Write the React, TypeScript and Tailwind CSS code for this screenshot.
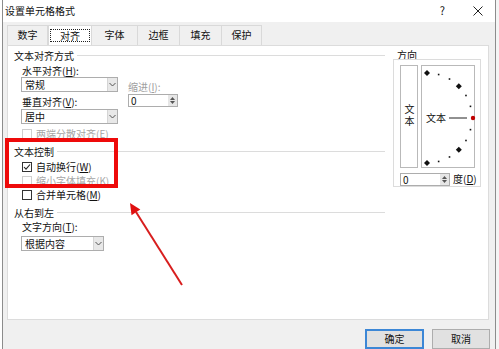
import React from "react";

const font = { fontFamily: '"Noto Sans CJK SC", "Noto Sans", sans-serif' };

function Header({ text }: { text: string }) {
  return (
    <div className="flex h-[14px] items-center">
      <span className="leading-none">{text}</span>
      <div className="ml-[3px] h-px flex-1 bg-[#dcdcdc]" />
    </div>
  );
}

function Select({ value, width }: { value: string; width: string }) {
  return (
    <div className={`flex h-[15px] ${width} border border-[#adadad] bg-white`}>
      <span className="flex-1 pl-[3px] leading-[13px]">{value}</span>
      <div className="flex w-[10px] items-center justify-center border-l border-[#d5d5d5] bg-[#e8e8e8]">
        <svg width="7" height="5" viewBox="0 0 7 5">
          <path d="M0.5 1 L3.5 4 L6.5 1" fill="none" stroke="#555" strokeWidth="1" />
        </svg>
      </div>
    </div>
  );
}

function Spinner({ width }: { width: string }) {
  return (
    <div className={`flex h-[13px] ${width} border border-[#adadad] bg-white`}>
      <span className="flex-1 pl-[2px] leading-[11px]">0</span>
      <div className="flex w-[9px] flex-col items-center justify-center gap-[1px] bg-[#e6e6e6]">
        <svg width="5" height="3" viewBox="0 0 5 3">
          <path d="M0 3 L2.5 0 L5 3 Z" fill="#555" />
        </svg>
        <svg width="5" height="3" viewBox="0 0 5 3">
          <path d="M0 0 L2.5 3 L5 0 Z" fill="#555" />
        </svg>
      </div>
    </div>
  );
}

function Check({ label, checked, disabled }: { label: React.ReactNode; checked?: boolean; disabled?: boolean }) {
  return (
    <div className={`flex h-[14px] items-center pl-px ${disabled ? "text-[#a6a6a6]" : "text-[#111]"}`}>
      <div
        className={`flex h-[10px] w-[10px] items-center justify-center border bg-white ${
          disabled ? "border-[#cfcfcf]" : "border-[#333]"
        }`}
      >
        {checked && (
          <svg width="8" height="8" viewBox="0 0 8 8">
            <path d="M1 4 L3 6.2 L7 1.5" fill="none" stroke="#222" strokeWidth="1.1" />
          </svg>
        )}
      </div>
      <span className="ml-[4px] leading-none">{label}</span>
    </div>
  );
}

// dots of the orientation dial, every 15 degrees
const dots = [90, 75, 60, 45, 30, 15, 0, -15, -30, -45, -60, -75, -90].map((deg) => {
  const r = (deg * Math.PI) / 180;
  return { deg, x: 5 + 45 * Math.cos(r), y: 52 - 45 * Math.sin(r) };
});

export default function App() {
  return (
    <div className="relative flex h-[349px] w-[499px] overflow-hidden bg-white text-[10px] text-[#111]" style={font}>
      <div className="ml-[2px] flex w-[494px] flex-col border-x border-[#8c8c8c] bg-[#f0f0f0]">
        {/* title bar */}
        <div className="flex h-[22px] items-center bg-white pl-[2px]">
          <span className="flex-1 leading-none">设置单元格格式</span>
          <span className="mr-[28px] text-[11px] leading-none">?</span>
          <svg width="10" height="10" viewBox="0 0 10 10" className="mr-[12px]">
            <path d="M0.5 0.5 L9.5 9.5 M9.5 0.5 L0.5 9.5" stroke="#222" strokeWidth="1" />
          </svg>
        </div>

        {/* tabs */}
        <div className="ml-[4px] mt-[3px] flex h-[20px]">
          {[
            ["数字", "w-[41px]"],
            ["对齐", "w-[44px]"],
            ["字体", "w-[46px]"],
            ["边框", "w-[42px]"],
            ["填充", "w-[42px]"],
            ["保护", "w-[40px]"],
          ].map(([t, w], i) =>
            i === 1 ? (
              <div key={t} className={`flex ${w} items-center justify-center border-x border-t border-[#d9d9d9] bg-white`}>
                <span className="border border-dotted border-[#222] px-[9px] leading-[11px]">{t}</span>
              </div>
            ) : (
              <div key={t} className={`flex ${w} items-center justify-center border-r border-t border-[#d9d9d9] bg-[#f0f0f0] leading-none ${i === 0 ? "border-l" : ""}`}>
                {t}
              </div>
            )
          )}
        </div>

        {/* panel */}
        <div className="ml-[4px] flex h-[278px] w-[482px] border border-[#dcdcdc] bg-white pl-[6px] pt-[3px]">
          <div className="flex w-[371px] flex-col">
            <Header text="文本对齐方式" />
            <div className="flex pl-[7px]">
              <div className="flex w-[97px] flex-col">
                <div className="mt-[2px] flex h-[12px] items-center pl-px leading-none">
                  水平对齐(<u>H</u>):
                </div>
                <div>
                  <Select value="常规" width="w-[97px]" />
                </div>
                <div className="mt-[4px] flex h-[12px] items-center pl-px leading-none">
                  垂直对齐(<u>V</u>):
                </div>
                <div className="mt-[1px]">
                  <Select value="居中" width="w-[97px]" />
                </div>
                <div className="mt-[3px] w-[120px]">
                  <Check label={<>两端分散对齐(<u>E</u>)</>} disabled />
                </div>
              </div>
              <div className="ml-[10px] flex flex-col pt-[18px]">
                <div className="flex h-[12px] items-center leading-none text-[#a0a0a0]">
                  缩进(<u>I</u>):
                </div>
                <div className="mt-[1px]">
                  <Spinner width="w-[50px]" />
                </div>
              </div>
            </div>

            <div className="mt-[4px]">
              <Header text="文本控制" />
            </div>
            <div className="mt-[1px] flex flex-col pl-[7px]">
              <Check label={<>自动换行(<u>W</u>)</>} checked />
              <Check label={<>缩小字体填充(<u>K</u>)</>} disabled />
              <Check label={<>合并单元格(<u>M</u>)</>} />
            </div>

            <div className="mt-[4px]">
              <Header text="从右到左" />
            </div>
            <div className="flex flex-col pl-[7px]">
              <div className="mt-[1px] flex h-[12px] items-center pl-px leading-none">
                文字方向(<u>T</u>):
              </div>
              <div className="mt-[3px]">
                <Select value="根据内容" width="w-[83px]" />
              </div>
            </div>
          </div>

          {/* orientation */}
          <div className="ml-[8px] flex flex-col pt-px">
            <div className="h-[10px] pl-[4px] leading-[10px]">方向</div>
            <div className="-mt-px flex h-[128px] w-[88px] flex-col border border-[#dcdcdc] pl-[6px] pt-[5px]">
              <div className="flex h-[103px] gap-[3px]">
                <div className="flex w-[18px] items-center justify-center border border-[#b9b9b9]">
                  <span className="leading-none tracking-[2px] [writing-mode:vertical-rl] [text-orientation:upright]">文本</span>
                </div>
                <div className="relative w-[54px] border border-[#b9b9b9]">
                  <svg width="54" height="101" viewBox="0 0 54 101" className="absolute left-0 top-0">
                    <line x1="27" y1="52" x2="45" y2="52" stroke="#222" strokeWidth="1" />
                    {dots.map((d) =>
                      d.deg === 0 ? (
                        <circle key={d.deg} cx={d.x + 1} cy={d.y} r="2.2" fill="#c00000" />
                      ) : Math.abs(d.deg) % 45 === 0 ? (
                        <path
                          key={d.deg}
                          d={`M${d.x} ${d.y - 3} L${d.x + 3} ${d.y} L${d.x} ${d.y + 3} L${d.x - 3} ${d.y} Z`}
                          fill="#111"
                        />
                      ) : (
                        <rect key={d.deg} x={d.x - 0.8} y={d.y - 0.8} width="1.6" height="1.6" fill="#111" />
                      )
                    )}
                  </svg>
                  <span className="absolute left-[4px] top-[46px] leading-[12px]">文本</span>
                </div>
              </div>
              <div className="mt-[5px] flex items-center">
                <Spinner width="w-[50px]" />
                <span className="ml-[3px] leading-none">
                  度(<u>D</u>)
                </span>
              </div>
            </div>
          </div>
        </div>

        {/* buttons */}
        <div className="mt-[9px] flex justify-end gap-[8px] pr-[5px]">
          <div className="flex h-[20px] w-[59px] items-center justify-center border-2 border-[#3c87d6] bg-[#e1e1e1] leading-none">
            确定
          </div>
          <div className="flex h-[20px] w-[58px] items-center justify-center border border-[#adadad] bg-[#e1e1e1] leading-none">
            取消
          </div>
        </div>
      </div>
      <div className="flex-1 bg-[#f4f4f4]" />

      {/* annotation overlay */}
      <div className="absolute left-[5px] top-[138px] h-[50px] w-[113px] border-[4px] border-[#ee0a0a]" />
      <svg width="499" height="349" className="pointer-events-none absolute left-0 top-0">
        <line x1="182" y1="285" x2="136" y2="212" stroke="#d81e1e" strokeWidth="2" />
        <polygon points="130,203 131.5,215.3 140.3,209.6" fill="#e01010" />
      </svg>
    </div>
  );
}
